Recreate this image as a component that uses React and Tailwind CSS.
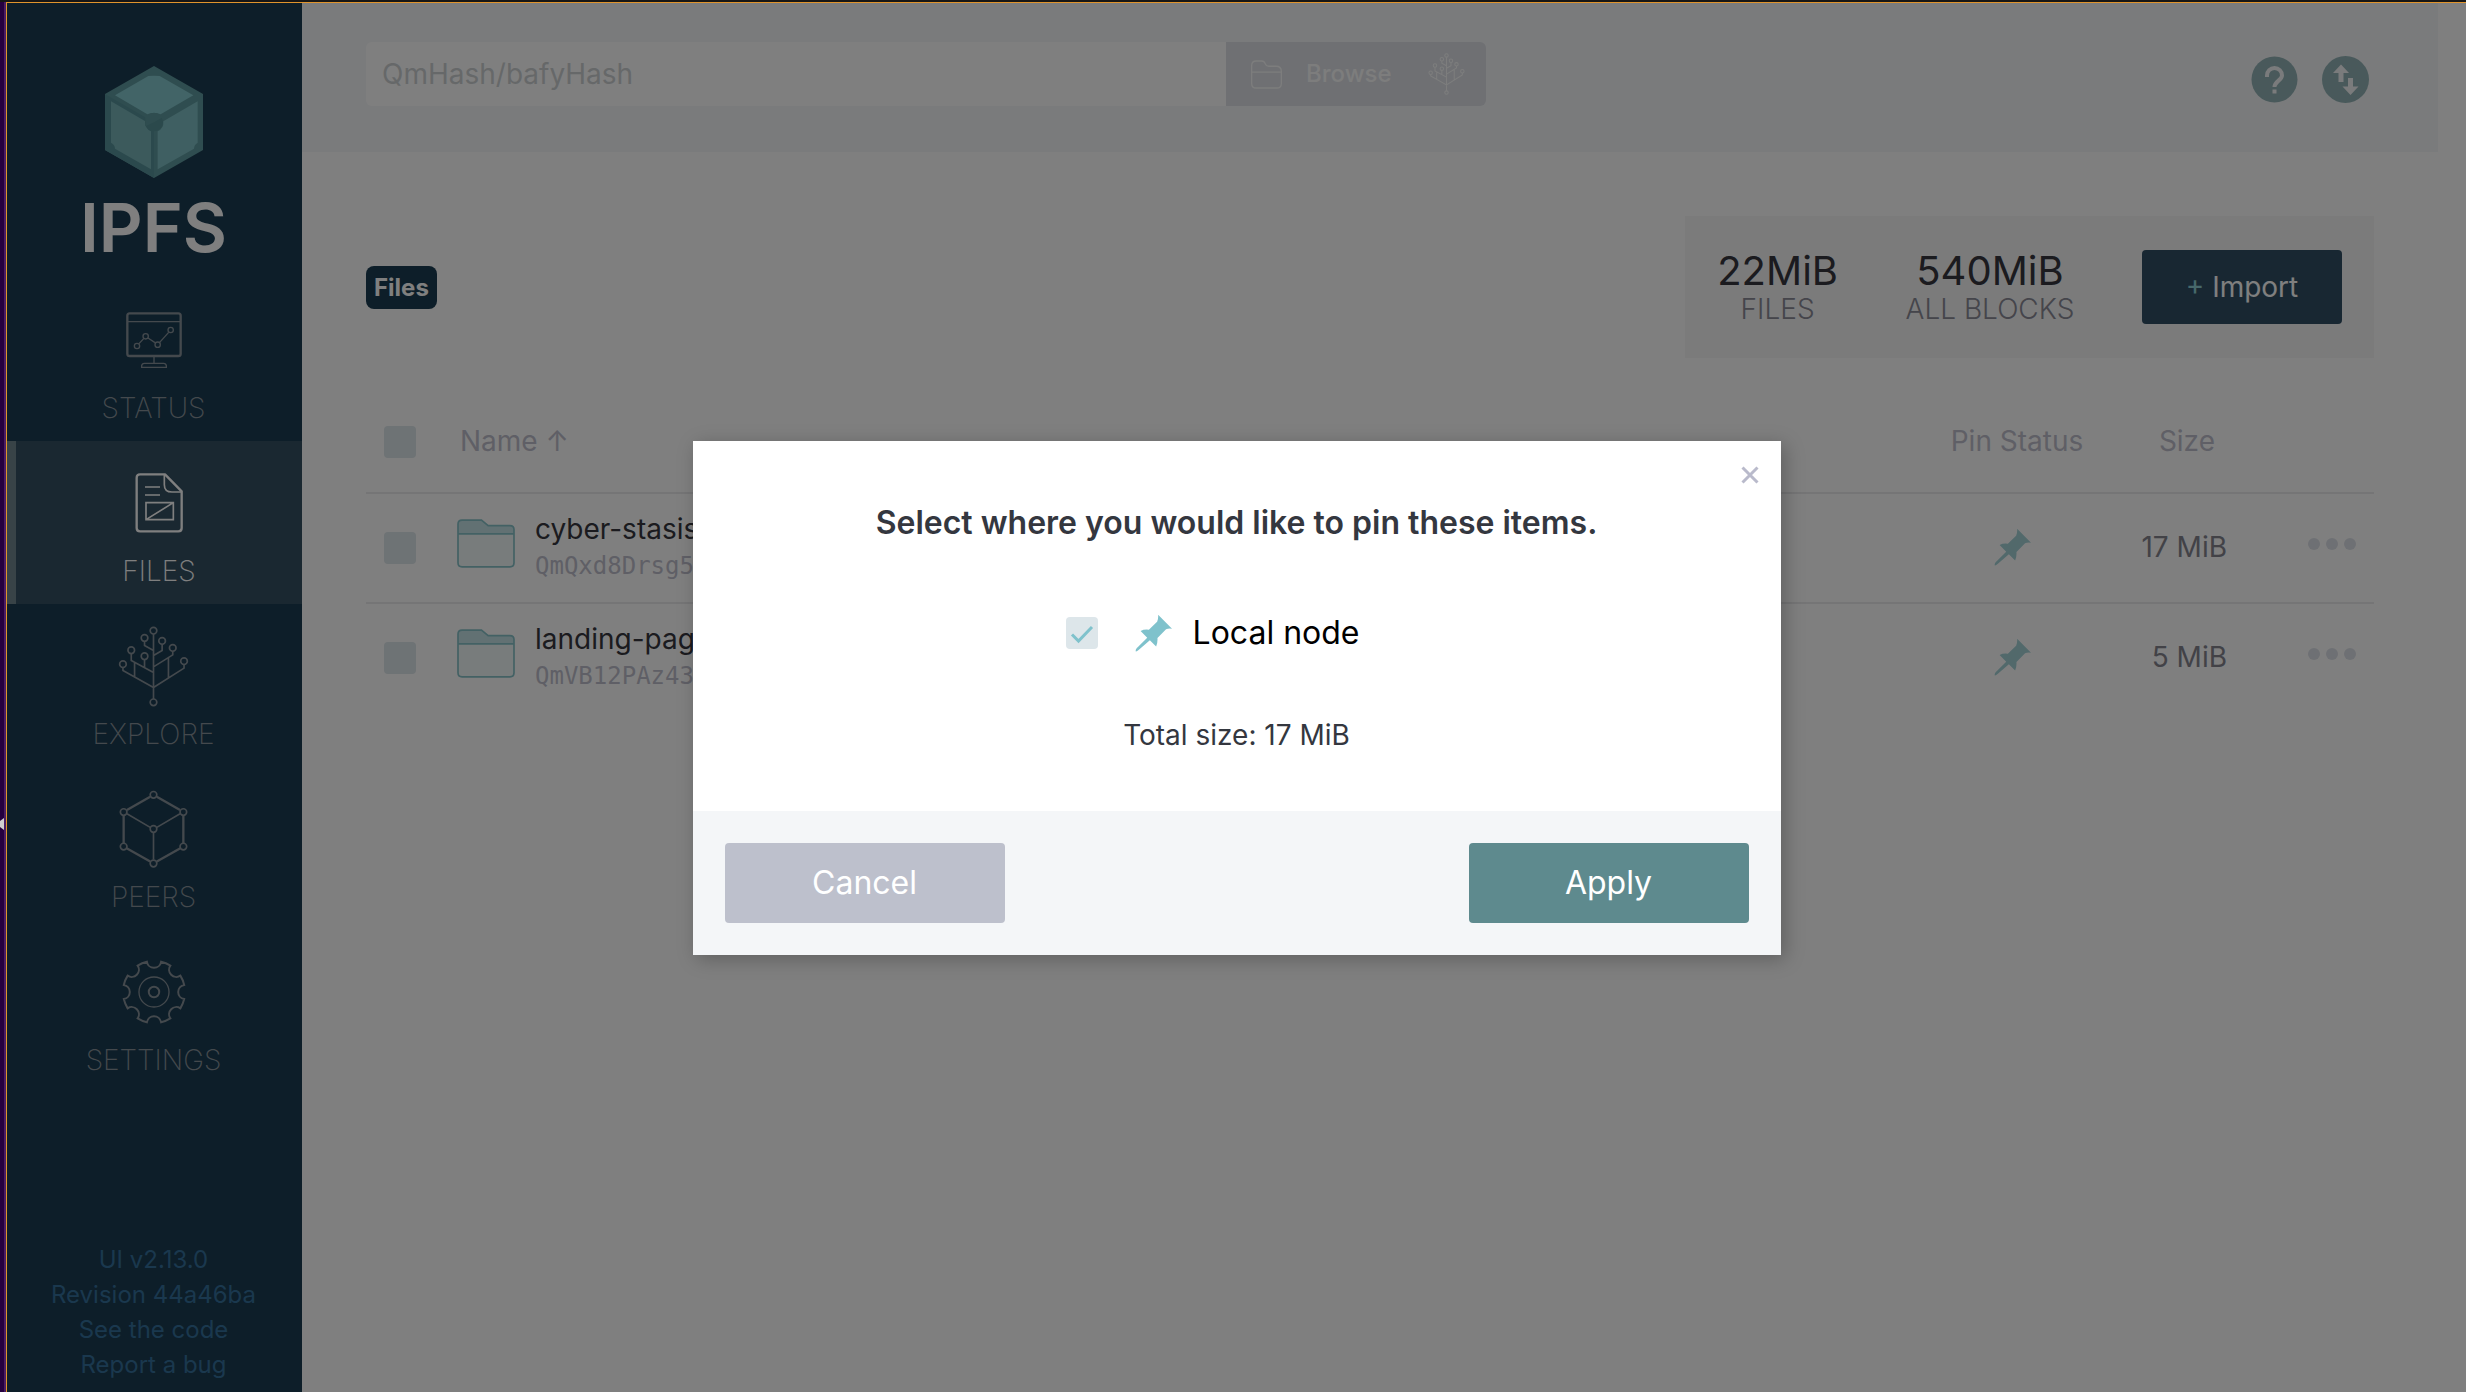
import React from "react";

const Tree = ({ className, strokeWidth = 5 }) => (
  <svg viewBox="356 586 212 244" className={className} fill="none" stroke="currentColor" strokeWidth={strokeWidth} aria-hidden="true">
    {[[462, 600], [435, 622], [488, 631], [395, 659], [520, 652], [435, 677], [370, 701], [554, 692], [462, 816]].map(([x, y]) => (
      <circle key={x + "-" + y} cx={x} cy={y} r="10" />
    ))}
    <path d="M462 610V806M435 632V645L462 660M488 641V660L462 675M395 669V690L462 726M520 662V673L462 709M435 687V712M370 711V720L462 771L554 713V702M405 696V739M507 682V741" />
  </svg>
);

const StatusIcon = () => (
  <svg viewBox="378 936 168 168" className="h-14 w-14" fill="none" stroke="currentColor" aria-hidden="true">
    <rect x="382" y="940" width="160" height="128" rx="7" strokeWidth="7" />
    <path d="M384 965H540M462 1070V1090M425 1102V1097Q426 1090 433 1090H491Q498 1090 499 1097V1102Z" strokeWidth="4" />
    <path d="M417 1031L431 1016M444 1014L465 1028M479 1027L506 997" strokeWidth="4" />
    <g strokeWidth="4">
      <circle cx="411" cy="1038" r="8" />
      <circle cx="437" cy="1009" r="8" />
      <circle cx="473" cy="1034" r="8" />
      <circle cx="512" cy="990" r="8" />
    </g>
  </svg>
);

const FilesIcon = () => (
  <svg viewBox="405 129 144 180" className="h-[60px] w-12" fill="none" stroke="currentColor" aria-hidden="true">
    <path d="M420 133H495L545 184V294Q545 304 535 304H420Q410 304 410 294V143Q410 133 420 133Z" strokeWidth="7" strokeLinejoin="round" />
    <path d="M493 135V164Q493 186 516 186H544" strokeWidth="5" />
    <path d="M435 171H480M435 195H480M438 218H520V269H438ZM438 269L520 218" strokeWidth="5" />
  </svg>
);

const PeersIcon = () => (
  <svg viewBox="358 90 208 234" className="h-[78px] w-[69px]" fill="none" stroke="currentColor" aria-hidden="true">
    <path d="M452 110L382 150M472 110L542 150M372 167V249M552 167V249M381 265L452 305M543 265L472 305" strokeWidth="7" />
    <path d="M382 161L452 202M542 161L472 202M462 218V299" strokeWidth="5" />
    <g strokeWidth="5">
      {[[462, 104], [372, 156], [552, 156], [462, 207], [372, 260], [552, 260], [462, 311]].map(([x, y]) => (
        <circle key={x + "-" + y} cx={x} cy={y} r="10" />
      ))}
    </g>
  </svg>
);

const gearPath = (() => {
  const point = (deg) => {
    const a = (deg * Math.PI) / 180;
    return (95 * Math.sin(a)).toFixed(1) + " " + (-95 * Math.cos(a)).toFixed(1);
  };
  let d = "M" + point(13.2);
  for (let i = 0; i < 8; i++) {
    d += "A95 95 0 0 1 " + point(i * 45 + 31.8) + "A22 22 0 0 0 " + point(i * 45 + 58.2);
  }
  return d + "Z";
})();

const SettingsIcon = () => (
  <svg viewBox="-98 -98 196 196" className="h-16 w-16" fill="none" stroke="currentColor" aria-hidden="true">
    <path d={gearPath} strokeWidth="6" />
    <circle r="46" strokeWidth="4" />
    <circle r="16" strokeWidth="6" />
  </svg>
);

const Logo = () => (
  <svg viewBox="315 197 294 336" className="h-28 w-[98px]" aria-hidden="true">
    <path d="M462 197L609 281V449L462 533L315 449V281Z" fill="#5f9ba0" />
    <path d="M315 281L462 366V533L315 449Z" fill="#57939a" />
    <path d="M345 285L445 227Q462 225 479 227L580 285L482 342Q462 333 442 342Z" fill="#84c8ce" />
    <path d="M333 303L436 363Q434 385 453 393V507L345 445Q345 433 333 427Z" fill="#78b4b8" />
    <path d="M593 303L490 363Q492 385 473 393V507L582 445Q582 433 593 427Z" fill="#7fbfc4" />
    <circle cx="462" cy="366" r="27" fill="#569298" />
    <path d="M462 366L436 351V378ZM462 366L488 351Q475 337 462 338Q449 337 436 351Z" fill="#5f9ba0" />
  </svg>
);

const Pin = ({ className }) => (
  <svg viewBox="286 68 112 114" className={className} fill="currentColor" aria-hidden="true">
    <path d="M356 70L398 112Q388 110 380 114L354 140Q355 155 350 166L331 147L295 178Q287 183 288 179Q288 175 291 171L323 139L303 119Q314 113 328 115L353 91Q357 84 356 70Z" />
  </svg>
);

const FolderIcon = () => (
  <svg viewBox="321 358 173 145" className="mt-2 h-[49px] w-[58px] shrink-0" aria-hidden="true">
    <path d="M324 402V373Q324 361 336 361H394L414 377H479Q491 377 491 389V402Z" fill="#c4e2e6" />
    <path d="M324 402H491V488Q491 500 479 500H336Q324 500 324 488Z" fill="#f0f8f8" />
    <path d="M324 402H491M324 488V373Q324 361 336 361H394L414 377H479Q491 377 491 389V488Q491 500 479 500H336Q324 500 324 488Z" fill="none" stroke="#86c2c8" strokeWidth="5" />
  </svg>
);

const nav = [
  { label: "STATUS", Icon: StatusIcon },
  { label: "FILES", Icon: FilesIcon, active: true },
  { label: "EXPLORE", Icon: () => <Tree className="h-[81px] w-[71px]" /> },
  { label: "PEERS", Icon: PeersIcon },
  { label: "SETTINGS", Icon: SettingsIcon },
];

const files = [
  { name: "cyber-stasis", hash: "QmQxd8Drsg5", size: "17 MiB" },
  { name: "landing-page", hash: "QmVB12PAz43", size: "5 MiB" },
];

const boxClass = "block h-8 w-8 appearance-none rounded bg-[#dde6ea]";

function Sidebar() {
  return (
    <aside className="flex w-[295px] shrink-0 flex-col bg-[#1b3c52]">
      <a href="#home" className="flex h-[275px] flex-col items-center pt-[63px] pr-0.5 text-white">
        <Logo />
        <span className="text-[68px] leading-[98px] font-semibold">IPFS</span>
      </a>
      <nav className="flex flex-col">
        {nav.map(({ label, Icon, active }) => (
          <a
            key={label}
            href={"#" + label.toLowerCase()}
            aria-current={active ? "page" : undefined}
            className={
              active
                ? "flex h-[163px] flex-col items-center border-l-[9px] border-[#70868e] bg-[#355062] pt-3 text-white"
                : "flex h-[163px] flex-col items-center pt-3 pr-0.5 text-[#88939b]"
            }
          >
            <span className="flex h-[100px] items-center">
              <Icon />
            </span>
            <span className="text-[28px] leading-9 font-extralight">{label}</span>
          </a>
        ))}
      </nav>
      <footer className="mt-auto flex flex-col items-center pr-0.5 pb-[10px] text-2xl leading-[35px] text-[#34709c]">
        <a href="#version">UI v2.13.0</a>
        <a href="#revision">Revision 44a46ba</a>
        <a href="#code">See the code</a>
        <a href="#bug">Report a bug</a>
      </footer>
    </aside>
  );
}

function Header() {
  return (
    <header className="flex h-[149px] items-start justify-between bg-[#f5f7f9] pt-[39px] pr-[69px] pl-16">
      <form className="flex h-16 w-[1120px]">
        <input
          aria-label="Path"
          placeholder="QmHash/bafyHash"
          className="min-w-0 flex-1 rounded-l-md bg-white px-4 text-[28px] placeholder:text-[#cdd1d3]"
        />
        <button type="button" className="flex w-[260px] items-center rounded-r-md bg-[#dee0e7] pl-[25px] text-2xl font-medium text-[#fafbfa]">
          <svg viewBox="0 0 94 86" className="h-[29px] w-[31px]" fill="none" stroke="currentColor" strokeWidth="4" aria-hidden="true">
            <path d="M2 70V16Q2 2 16 2H32Q40 2 43 10Q46 18 54 18H76Q92 18 92 34V70Q92 84 78 84H16Q2 84 2 70ZM2 36H92" />
          </svg>
          <span className="ml-6">Browse</span>
          <Tree className="mr-[21px] ml-auto h-[42px] w-[37px]" strokeWidth={6} />
        </button>
      </form>
      <div className="flex gap-6 pt-[14px]">
        <button type="button" aria-label="Help" className="rounded-full">
          <svg viewBox="0 0 47 47" className="h-[47px] w-[47px]" fill="none" aria-hidden="true">
            <circle cx="23.5" cy="23.5" r="23" fill="#93b3b6" />
            <path d="M16 21V19.5A7.5 7.5 0 0 1 31 19.5C31 24 23.5 25.5 23.5 31" stroke="#f5f7f9" strokeWidth="4" />
            <path d="M21.500 33.500H25.500V37.500H21.500Z" fill="#f5f7f9" />
          </svg>
        </button>
        <button type="button" aria-label="Transfers" className="rounded-full">
          <svg viewBox="0 0 47 47" className="h-[47px] w-[47px]" aria-hidden="true">
            <circle cx="23.5" cy="23.5" r="23.5" fill="#93b3b6" />
            <path d="M19 8.500L27 17H21.500V26H16.500V17H11ZM26 22H31V30.500H36.500L28.500 39L20.500 30.500H26Z" fill="#f5f7f9" />
          </svg>
        </button>
      </div>
    </header>
  );
}

function Stat({ value, label }) {
  return (
    <div className="flex flex-col items-center">
      <span className="text-[40px] leading-[44px] text-[#36373f]">{value}</span>
      <span className="text-[28px] leading-8 font-light text-[#8a8a96]">{label}</span>
    </div>
  );
}

function FileTable() {
  return (
    <table className="mt-[34px] w-full table-fixed border-separate border-spacing-0 text-[28px]">
      <colgroup>
        <col className="w-[91px]" />
        <col />
        <col className="w-[180px]" />
        <col className="w-[120px]" />
        <col className="w-[147px]" />
      </colgroup>
      <thead>
        <tr className="h-[100px] text-[#bfbfcc]">
          <th className="pl-[18px]">
            <input type="checkbox" aria-label="Select all" className={boxClass} />
          </th>
          <th className="pb-0.5 pl-[3px] text-left font-normal">
            <button type="button">Name ↑</button>
          </th>
          <th className="pb-0.5 font-normal">Pin Status</th>
          <th className="pr-3 pb-0.5 text-right font-normal">Size</th>
          <th />
        </tr>
      </thead>
      <tbody className="[&_td]:border-t-2 [&_td]:border-[#eaeaec]">
        {files.map((f) => (
          <tr key={f.name} className="h-[110px]">
            <td className="pl-[18px]">
              <input type="checkbox" aria-label={"Select " + f.name} className={boxClass} />
            </td>
            <td>
              <div className="flex gap-5">
                <FolderIcon />
                <div>
                  <div className="leading-[37px] text-[#36373f]">{f.name}</div>
                  <div className="font-['DejaVu_Sans_Mono',monospace] text-2xl leading-[37px] text-[#bfbfcc]">{f.hash}</div>
                </div>
              </div>
            </td>
            <td className="pr-[10px] pb-0.5">
              <Pin className="mx-auto h-[38px] w-[37px] text-[#a4d2d7]" />
            </td>
            <td className="pb-0.5 text-right text-[#85858f]">{f.size}</td>
            <td>
              <button type="button" aria-label={"More actions for " + f.name} className="mr-[18px] mb-2 ml-auto flex gap-1.5 text-[#dde1e8]">
                <span className="h-3 w-3 rounded-full bg-current" />
                <span className="h-3 w-3 rounded-full bg-current" />
                <span className="h-3 w-3 rounded-full bg-current" />
              </button>
            </td>
          </tr>
        ))}
      </tbody>
    </table>
  );
}

function PinDialog() {
  return (
    <div className="absolute inset-0 flex items-center justify-center bg-black/50">
      <section role="dialog" aria-labelledby="pin-title" className="relative w-[1088px] bg-white shadow-[4px_4px_18px_rgba(0,0,0,0.25)]">
        <button type="button" aria-label="Close" className="absolute top-[23px] right-5 p-0.5 text-[#b9bacb]">
          <svg viewBox="0 0 18 18" className="h-[18px] w-[18px]" stroke="currentColor" strokeWidth="3" aria-hidden="true">
            <path d="M1.500 1.500L16.500 16.500M16.500 1.500L1.500 16.500" />
          </svg>
        </button>
        <div className="flex flex-col items-center pt-[62px] pb-14">
          <h2 id="pin-title" className="text-[32px] leading-10 font-semibold text-[#34373f]">
            Select where you would like to pin these items.
          </h2>
          <label className="mt-[70px] flex items-center pr-12 text-[32px] leading-10 text-black">
            <span className="relative mr-[37px]">
              <input type="checkbox" defaultChecked className={boxClass} />
              <svg viewBox="0 0 32 32" className="pointer-events-none absolute inset-0 h-8 w-8" fill="none" stroke="#7fc2cc" strokeWidth="3" aria-hidden="true">
                <path d="M6 17.500L12.500 24L26 10" />
              </svg>
            </span>
            <Pin className="mr-[21px] h-[38px] w-[37px] text-[#7fc2cc]" />
            Local node
          </label>
          <p className="mt-[62px] text-[28px] leading-10 text-[#34373f]">Total size: 17 MiB</p>
        </div>
        <div className="flex justify-between bg-[#f4f6f8] p-8 text-[32px] text-white">
          <button type="button" className="h-20 w-[280px] rounded bg-[#bdc0cc]">Cancel</button>
          <button type="button" className="h-20 w-[280px] rounded bg-[#5e8a8e]">Apply</button>
        </div>
      </section>
    </div>
  );
}

export default function App() {
  return (
    <div className="flex min-h-screen flex-col bg-[#161616] font-['Inter',sans-serif]">
      <div className="flex flex-1 pt-[2px]">
        <div className="flex w-1 flex-col justify-center bg-[#25003f]">
          <svg viewBox="0 0 4 12" className="mt-[253px] h-3 w-1" aria-hidden="true">
            <path d="M0 3L4 0V12L0 9Z" fill="#d0d0d0" />
          </svg>
        </div>
        <div className="w-[2px] bg-[#4a1d63]" />
        <div className="relative flex min-w-0 flex-1 border-t border-l border-[#e0942c] bg-white">
          <Sidebar />
          <div className="mr-7 min-w-0 flex-1">
            <Header />
            <main className="px-16 pt-16">
              <div className="flex items-center justify-between">
                <a href="#root" className="rounded-lg bg-[#1b3c52] px-2 text-2xl leading-[43px] font-bold text-white">Files</a>
                <div className="flex h-[142px] items-center bg-[#f6f6f6] px-8">
                  <Stat value="22MiB" label="FILES" />
                  <div className="mx-16 min-w-[176px]">
                    <Stat value="540MiB" label="ALL BLOCKS" />
                  </div>
                  <button type="button" className="h-[74px] w-[200px] rounded bg-[#304f64] text-[28px] text-white">
                    <span className="text-[#8ed0d6]">+</span> Import
                  </button>
                </div>
              </div>
              <FileTable />
            </main>
          </div>
          <PinDialog />
        </div>
      </div>
    </div>
  );
}
